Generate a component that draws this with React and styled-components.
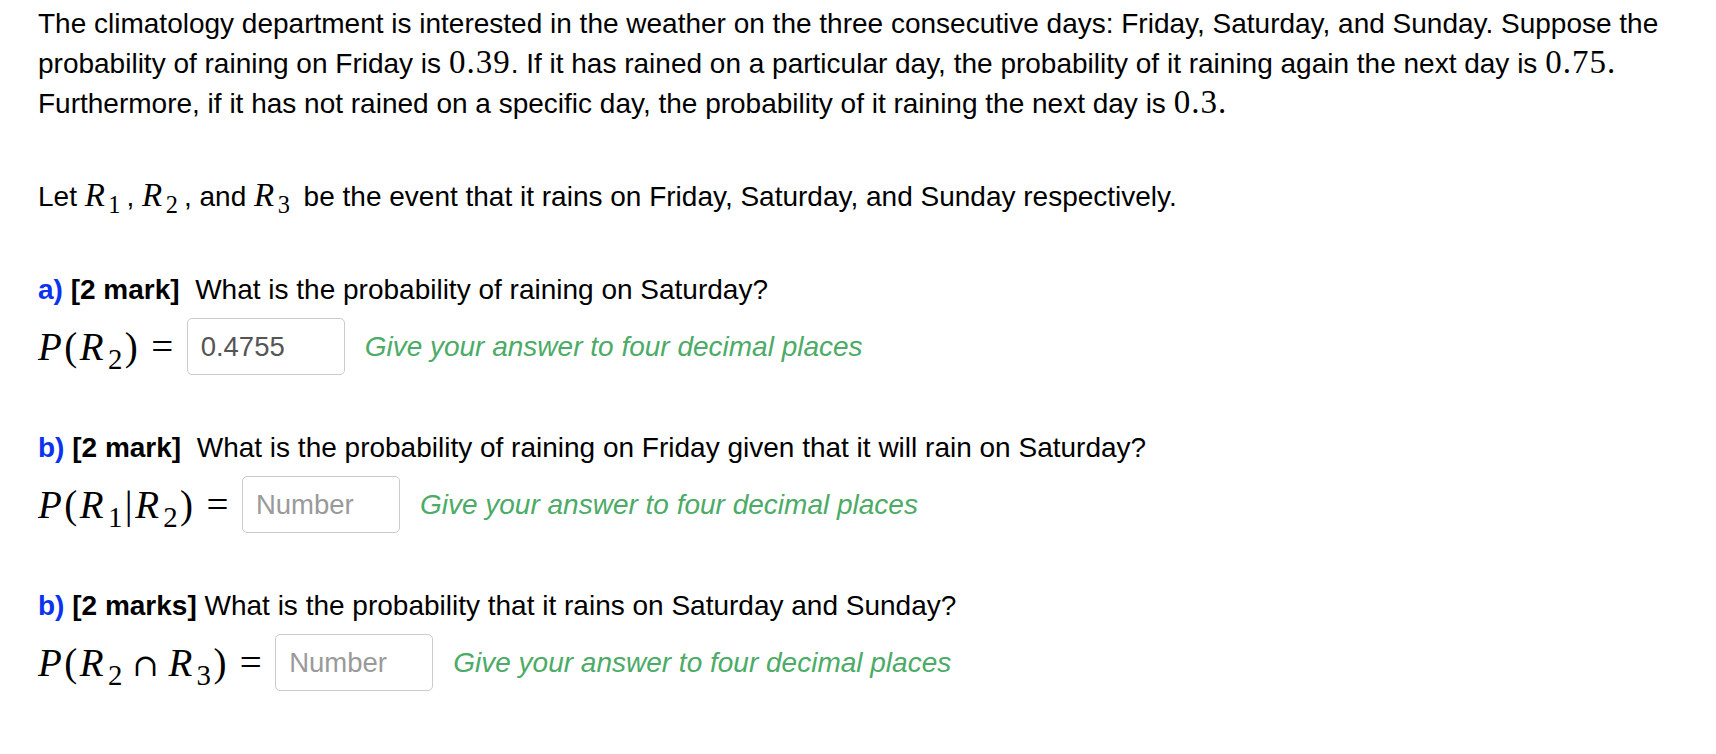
import React from 'react';
import styled, { createGlobalStyle } from 'styled-components';

const GlobalStyle = createGlobalStyle`
  body {
    margin: 0;
    background: #ffffff;
  }
`;

const Page = styled.div`
  padding: 4px 10px 40px 38px;
  font-family: 'Liberation Sans', Arial, sans-serif;
  font-size: 28px;
  color: #000;
`;
const Paragraph = styled.p`
  margin: 0;
  line-height: 40px;
`;
const LetLine = styled(Paragraph)`
  margin-top: 53px;
`;
const Question = styled.section`
  display: flex;
  flex-direction: column;
  gap: 8px;
  margin-top: 53px;
`;
const QuestionLabel = styled.div`
  line-height: 40px;
  white-space: pre;
`;
const Part = styled.span`
  color: #0b33f0;
  font-weight: bold;
`;
const Marks = styled.span`
  font-weight: bold;
`;
const AnswerRow = styled.div`
  display: flex;
  align-items: center;
  height: 57px;
`;
const Formula = styled.span`
  font-family: 'Liberation Serif', 'Times New Roman', serif;
  font-size: 39px;
  letter-spacing: 2.5px;
  white-space: nowrap;
`;
const InlineMath = styled.span`
  font-family: 'Liberation Serif', 'Times New Roman', serif;
  font-size: 33px;
  line-height: 0;
  letter-spacing: ${(p) => (p.$wide ? '2px' : '1px')};
  margin-right: ${(p) => (p.$wide ? '4px' : '0')};
  white-space: nowrap;
`;
const Var = styled.i`
  font-style: italic;
`;
const Sub = styled.span`
  font-size: 0.74em;
  position: relative;
  top: 0.3em;
  line-height: 0;
  margin-left: 0.06em;
`;
const Rel = styled.span`
  margin: 0 0.28em;
`;
const Bin = styled.span`
  margin: 0 0.24em;
  font-family: 'DejaVu Serif', serif;
  font-size: 0.8em;
`;
const AnswerBox = styled.input`
  box-sizing: border-box;
  width: 158px;
  height: 57px;
  margin: 0;
  padding: 0 13px;
  border: 1.5px solid #cbcbcb;
  border-radius: 5px;
  font-family: 'Liberation Sans', Arial, sans-serif;
  font-size: 27.5px;
  color: #555;
  background: #fff;
  outline: none;
  &::placeholder {
    color: #9a9a9a;
  }
`;
const Hint = styled.span`
  margin-left: 20px;
  color: #4cab66;
  font-style: italic;
`;

const R = ({ n }) => (
  <>
    <Var>R</Var>
    <Sub>{n}</Sub>
  </>
);

const questions = [
  {
    part: 'a)',
    marks: '[2 mark]  ',
    text: 'What is the probability of raining on Saturday?',
    formula: (
      <>
        <Var>P</Var>(<R n={2} />)
      </>
    ),
    value: '0.4755',
  },
  {
    part: 'b)',
    marks: '[2 mark]  ',
    text: 'What is the probability of raining on Friday given that it will rain on Saturday?',
    formula: (
      <>
        <Var>P</Var>(<R n={1} />|<R n={2} />)
      </>
    ),
    value: '',
  },
  {
    part: 'b)',
    marks: '[2 marks] ',
    text: 'What is the probability that it rains on Saturday and Sunday?',
    formula: (
      <>
        <Var>P</Var>(<R n={2} />
        <Bin>∩</Bin>
        <R n={3} />)
      </>
    ),
    value: '',
  },
];

const App = () => (
  <Page>
    <GlobalStyle />
    <Paragraph>
      The climatology department is interested in the weather on the three consecutive days: Friday,
      Saturday, and Sunday. Suppose the probability of raining on Friday is <InlineMath>0.39</InlineMath>. If it
      has rained on a particular day, the probability of it raining again the next day is{' '}
      <InlineMath>0.75.</InlineMath> Furthermore, if it has not rained on a specific day, the probability of it
      raining the next day is <InlineMath>0.3.</InlineMath>
    </Paragraph>
    <LetLine>
      Let{' '}
      <InlineMath $wide>
        <R n={1} />
      </InlineMath>
      ,{' '}
      <InlineMath $wide>
        <R n={2} />
      </InlineMath>
      , and{' '}
      <InlineMath $wide>
        <R n={3} />
      </InlineMath>{' '}
      be the event that it rains on Friday, Saturday, and Sunday respectively.
    </LetLine>
    {questions.map((q, i) => (
      <Question key={i}>
        <QuestionLabel>
          <Part>{q.part}</Part> <Marks>{q.marks}</Marks>
          {q.text}
        </QuestionLabel>
        <AnswerRow>
          <Formula>
            {q.formula}
            <Rel>=</Rel>
          </Formula>
          <AnswerBox readOnly value={q.value} placeholder="Number" />
          <Hint>Give your answer to four decimal places</Hint>
        </AnswerRow>
      </Question>
    ))}
  </Page>
);

export default App;
